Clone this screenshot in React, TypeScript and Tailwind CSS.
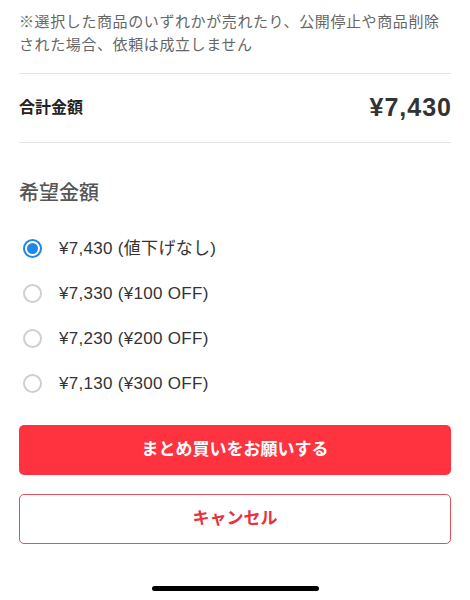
import { useState } from "react";

const options = [
  { value: 7430, label: "¥7,430 (値下げなし)" },
  { value: 7330, label: "¥7,330 (¥100 OFF)" },
  { value: 7230, label: "¥7,230 (¥200 OFF)" },
  { value: 7130, label: "¥7,130 (¥300 OFF)" },
];

export default function App() {
  const [selected, setSelected] = useState(7430);

  return (
    <div
      className="w-[470px] h-[600px] bg-white flex flex-col px-[19px] text-[#333]"
      style={{ fontFamily: '"Liberation Sans", "Noto Sans CJK JP", sans-serif' }}
    >
      {/* 注意書き */}
      <p className="pt-[10px] text-[15px] leading-[23px] text-[#666] tracking-[0.6px]">
        ※選択した商品のいずれかが売れたり、公開停止や商品削除
        <br />
        された場合、依頼は成立しません
      </p>

      {/* 合計 */}
      <div className="mt-[17px] border-t border-b border-[#e4e4e4] h-[70px] flex items-center justify-between">
        <span className="text-[16px] font-bold text-[#222]">合計金額</span>
        <span className="text-[25px] font-bold text-[#333] tracking-[1px] mr-[-1px]">¥7,430</span>
      </div>

      {/* 希望金額 */}
      <h2 className="mt-[35px] text-[20px] font-medium text-[#555] leading-[30px]">希望金額</h2>

      <ul className="mt-[18px] flex flex-col">
        {options.map((o) => {
          const on = selected === o.value;
          return (
            <li key={o.value}>
              <button
                onClick={() => setSelected(o.value)}
                className="w-full h-[45px] flex items-center text-left"
              >
                <span className="w-[28px] flex justify-center ml-[-1px]">
                  {on ? (
                    <span className="w-[19px] h-[19px] rounded-full border-2 border-[#1e88e5] flex items-center justify-center">
                      <span className="w-[11px] h-[11px] rounded-full bg-[#1e88e5]" />
                    </span>
                  ) : (
                    <span className="w-[19px] h-[19px] rounded-full border-2 border-[#cfcfcf]" />
                  )}
                </span>
                <span className="ml-[13px] text-[17px] tracking-[0.3px] text-[#333]">{o.label}</span>
              </button>
            </li>
          );
        })}
      </ul>

      {/* ボタン */}
      <button className="mt-[19px] h-[50px] w-full rounded-[5px] bg-[#ff333f] text-white text-[17px] font-bold">
        まとめ買いをお願いする
      </button>
      <button className="mt-[19px] h-[50px] w-full rounded-[5px] border border-[#e0525a] bg-white text-[#e8323d] text-[17px] font-bold">
        キャンセル
      </button>

      {/* ホームインジケーター */}
      <div className="mt-auto mb-[9px] flex justify-center">
        <div className="w-[167px] h-[5px] rounded-full bg-black" />
      </div>
    </div>
  );
}
